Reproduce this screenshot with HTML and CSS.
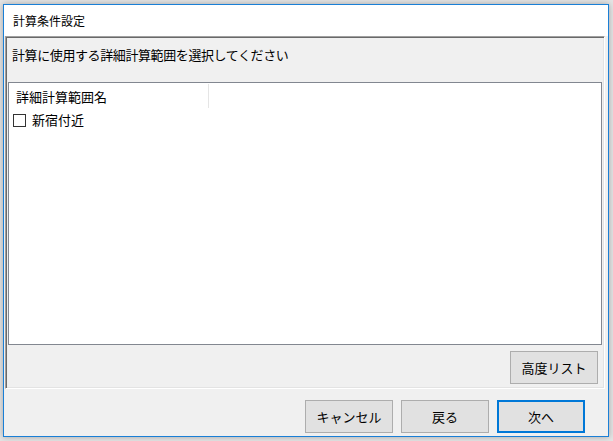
FILE: index.html
```html
<!DOCTYPE html>
<html lang="ja">
<head>
<meta charset="utf-8">
<title>計算条件設定</title>
<link rel="stylesheet" href="styles.css">
</head>
<body>
<div class="window">
  <div class="titlebar">計算条件設定</div>
  <div class="client">
    <div class="panel">
      <div class="prompt">計算に使用する詳細計算範囲を選択してください</div>
      <div class="list">
        <div class="list-header"><div class="col">詳細計算範囲名</div></div>
        <div class="row"><span class="cb"></span><span class="label">新宿付近</span></div>
      </div>
      <div class="panel-actions"><button class="btn">高度リスト</button></div>
    </div>
    <div class="footer">
      <button class="btn">キャンセル</button>
      <button class="btn">戻る</button>
      <button class="btn primary">次へ</button>
    </div>
  </div>
</div>
</body>
</html>
```
FILE: styles.css
```css
html, body {
  margin: 0;
  padding: 0;
}
body {
  width: 613px;
  height: 441px;
  background: #e4e4e4;
  font-family: "Noto Sans CJK JP", "Noto Sans", sans-serif;
  color: #000;
  overflow: hidden;
}
.window {
  margin: 4px 0 0 3px;
  width: 606px;
  height: 433px;
  box-sizing: border-box;
  border: 1px solid #1a7fd6;
  background: #f0f0f0;
  box-shadow: 0 0 6px rgba(0, 0, 0, 0.28);
  display: flex;
  flex-direction: column;
}
.titlebar {
  height: 31px;
  line-height: 31px;
  background: #fff;
  padding-left: 9px;
  font-size: 12px;
}
.client {
  flex: 1;
  display: flex;
  flex-direction: column;
}
.panel {
  margin-left: 1px;
  width: 600px;
  height: 353px;
  box-sizing: border-box;
  border: 1px solid;
  border-color: #a0a0a0 #fff #fff #a0a0a0;
  box-shadow: inset 1px 1px 0 #696969, inset -1px -1px 0 #e3e3e3;
  padding: 1px;
  display: flex;
  flex-direction: column;
}
.prompt {
  height: 44px;
  box-sizing: border-box;
  padding: 8px 0 0 5px;
  line-height: 18px;
  font-size: 13px;
  letter-spacing: -0.4px;
}
.list {
  margin-left: 1px;
  width: 594px;
  height: 263px;
  box-sizing: border-box;
  border: 1px solid #828790;
  background: #fff;
}
.list-header {
  height: 25px;
  display: flex;
}
.col {
  width: 200px;
  box-sizing: border-box;
  border-right: 1px solid #e5e5e5;
  padding-left: 7px;
  line-height: 25px;
  font-size: 13px;
  margin-top: 1px;
  height: 24px;
}
.row {
  margin-top: 3px;
  height: 18px;
  display: flex;
  align-items: center;
  padding-left: 4px;
  font-size: 13px;
}
.cb {
  width: 13px;
  height: 13px;
  box-sizing: border-box;
  border: 1px solid #333;
  background: #fff;
  margin-right: 6px;
}
.label {
  line-height: 18px;
}
.panel-actions {
  display: flex;
  justify-content: flex-end;
  padding: 6px 5px 0 0;
}
.btn {
  width: 88px;
  height: 33px;
  box-sizing: border-box;
  border: 1px solid #adadad;
  background: #e1e1e1;
  font-family: "Noto Sans CJK JP", "Noto Sans", sans-serif;
  font-size: 13px;
  color: #000;
  padding: 0;
  margin: 0;
}
.btn.primary {
  border: 2px solid #0078d7;
}
.footer {
  display: flex;
  justify-content: flex-end;
  gap: 8px;
  padding: 11px 23px 0 0;
}
```
